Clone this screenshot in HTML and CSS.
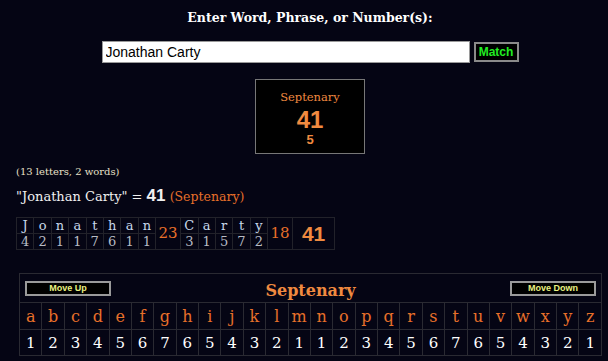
FILE: index.html
```html
<!DOCTYPE html>
<html lang="en">
  <head>
    <meta charset="UTF-8" />
    <title>Gematria - Septenary</title>
    <link rel="stylesheet" href="styles.css">
  </head>
  <body>
    <div class="entry">
      <h2 class="entry-title">Enter Word, Phrase, or Number(s):</h2>
      <div class="entry-row">
        <input class="entry-input" type="text" value="Jonathan Carty" />
        <button class="match-btn">Match</button>
      </div>
    </div>

    <div class="result-wrap">
      <div class="result-box">
        <div class="result-name">Septenary</div>
        <div class="result-value">41</div>
        <div class="result-reduced">5</div>
      </div>
    </div>

    <div class="summary">
      <p class="counts">(13 letters, 2 words)</p>
      <p class="equation">"Jonathan Carty" = <b>41</b> <span class="cipher">(Septenary)</span></p>

      <table class="breakdown">
        <tr>
          <td class="ch">J</td><td class="ch">o</td><td class="ch">n</td><td class="ch">a</td>
          <td class="ch">t</td><td class="ch">h</td><td class="ch">a</td><td class="ch">n</td>
          <td class="word-sum" rowspan="2">23</td>
          <td class="ch">C</td><td class="ch">a</td><td class="ch">r</td><td class="ch">t</td><td class="ch">y</td>
          <td class="word-sum" rowspan="2">18</td>
          <td class="total" rowspan="2">41</td>
        </tr>
        <tr>
          <td class="num">4</td><td class="num">2</td><td class="num">1</td><td class="num">1</td>
          <td class="num">7</td><td class="num">6</td><td class="num">1</td><td class="num">1</td>
          <td class="num">3</td><td class="num">1</td><td class="num">5</td><td class="num">7</td><td class="num">2</td>
        </tr>
      </table>
    </div>

    <table class="chart">
      <tr>
        <td class="chart-head" colspan="26">
          <div class="chart-bar">
            <button class="move-btn">Move Up</button>
            <span class="chart-title">Septenary</span>
            <button class="move-btn">Move Down</button>
          </div>
        </td>
      </tr>
      <tr class="chart-letters">
        <td>a</td><td>b</td><td>c</td><td>d</td><td>e</td><td>f</td><td>g</td><td>h</td><td>i</td>
        <td>j</td><td>k</td><td>l</td><td>m</td><td>n</td><td>o</td><td>p</td><td>q</td><td>r</td>
        <td>s</td><td>t</td><td>u</td><td>v</td><td>w</td><td>x</td><td>y</td><td>z</td>
      </tr>
      <tr class="chart-values">
        <td>1</td><td>2</td><td>3</td><td>4</td><td>5</td><td>6</td><td>7</td><td>6</td><td>5</td>
        <td>4</td><td>3</td><td>2</td><td>1</td><td>1</td><td>2</td><td>3</td><td>4</td><td>5</td>
        <td>6</td><td>7</td><td>6</td><td>5</td><td>4</td><td>3</td><td>2</td><td>1</td>
      </tr>
    </table>
  </body>
</html>
```

FILE: styles.css
```css
/* Page */
body {
  margin: 0;
  background-color: #050514;
  color: #ffffff;
  font-family: "DejaVu Serif", "Liberation Serif", serif;
}

/* Entry form */
.entry {
  text-align: center;
  padding-top: 10px;
  padding-left: 12px;
}

.entry-title {
  margin: 0;
  font-size: 12.5px;
  line-height: 16px;
  font-weight: bold;
}

.entry-row {
  display: flex;
  justify-content: center;
  align-items: center;
  gap: 4px;
  margin-top: 15px;
}

.entry-input {
  width: 368px;
  height: 22px;
  box-sizing: border-box;
  margin: 0;
  padding: 0 3px;
  border: 1px solid #9a9a9a;
  background: #ffffff;
  color: #000000;
  font-family: "Liberation Sans", Arial, sans-serif;
  font-size: 14px;
}

.match-btn {
  width: 45px;
  height: 20px;
  box-sizing: border-box;
  margin: 0;
  padding: 0;
  background: #000000;
  border: 2px solid #8a8a8a;
  color: #22ee22;
  font-family: "Liberation Sans", Arial, sans-serif;
  font-size: 12px;
  font-weight: bold;
}

/* Result box */
.result-wrap {
  padding-left: 12px;
  margin-top: 16px;
}

.result-box {
  width: 110px;
  height: 75px;
  box-sizing: border-box;
  margin: 0 auto;
  padding-top: 9px;
  border: 1px solid #777777;
  background: #000000;
  text-align: center;
  color: #f08a40;
}

.result-name {
  font-size: 11.5px;
  line-height: 16px;
}

.result-value {
  margin-top: 2px;
  font-size: 24px;
  line-height: 26px;
  font-weight: bold;
  font-family: "Liberation Sans", Arial, sans-serif;
}

.result-reduced {
  font-size: 13px;
  line-height: 14px;
  font-weight: bold;
  font-family: "Liberation Sans", Arial, sans-serif;
}

/* Summary */
.summary {
  padding: 0 16px;
}

.counts {
  margin: 11px 0 0;
  font-size: 10px;
  line-height: 14px;
  color: #e8e0c8;
}

.equation {
  margin: 7px 0 0;
  font-size: 13px;
  line-height: 20px;
  color: #f0f0f0;
}

.equation b {
  font-family: "Liberation Sans", Arial, sans-serif;
  font-size: 17px;
}

.cipher {
  color: #e8702a;
  font-size: 12.5px;
}

.breakdown {
  margin-top: 10px;
  border-collapse: collapse;
}

.breakdown td {
  border: 1px solid #22222a;
  padding: 0;
  text-align: center;
  font-size: 13px;
  line-height: 15px;
}

.breakdown .ch {
  width: 16.4px;
  color: #c8d8ea;
}

.breakdown .num {
  color: #b8bcc4;
}

.breakdown .word-sum {
  width: 24px;
  color: #e8702a;
  font-size: 15px;
}

.breakdown .total {
  width: 41px;
  color: #f08a40;
  font-family: "Liberation Sans", Arial, sans-serif;
  font-weight: bold;
  font-size: 21px;
}

/* Cipher chart */
.chart {
  width: 583px;
  margin: 23px 0 0 19px;
  border-collapse: collapse;
  table-layout: fixed;
}

.chart td {
  border: 1px solid #2a2a32;
  padding: 0;
  text-align: center;
}

.chart-head {
  height: 28px;
}

.chart-bar {
  display: flex;
  justify-content: space-between;
  align-items: center;
  padding: 0 5px;
}

.move-btn {
  width: 86px;
  height: 15px;
  box-sizing: border-box;
  margin: 0;
  padding: 0;
  background: #000000;
  border: 2px solid #9a9a9a;
  color: #e8f080;
  font-family: "Liberation Sans", Arial, sans-serif;
  font-size: 9px;
  font-weight: bold;
}

.chart-title {
  color: #f08a40;
  font-size: 16px;
  font-weight: bold;
  padding-top: 4px;
}

.chart-letters td {
  height: 26px;
  color: #e8702a;
  font-size: 16px;
}

.chart-values td {
  height: 25px;
  color: #ffffff;
  font-size: 15px;
}
```
